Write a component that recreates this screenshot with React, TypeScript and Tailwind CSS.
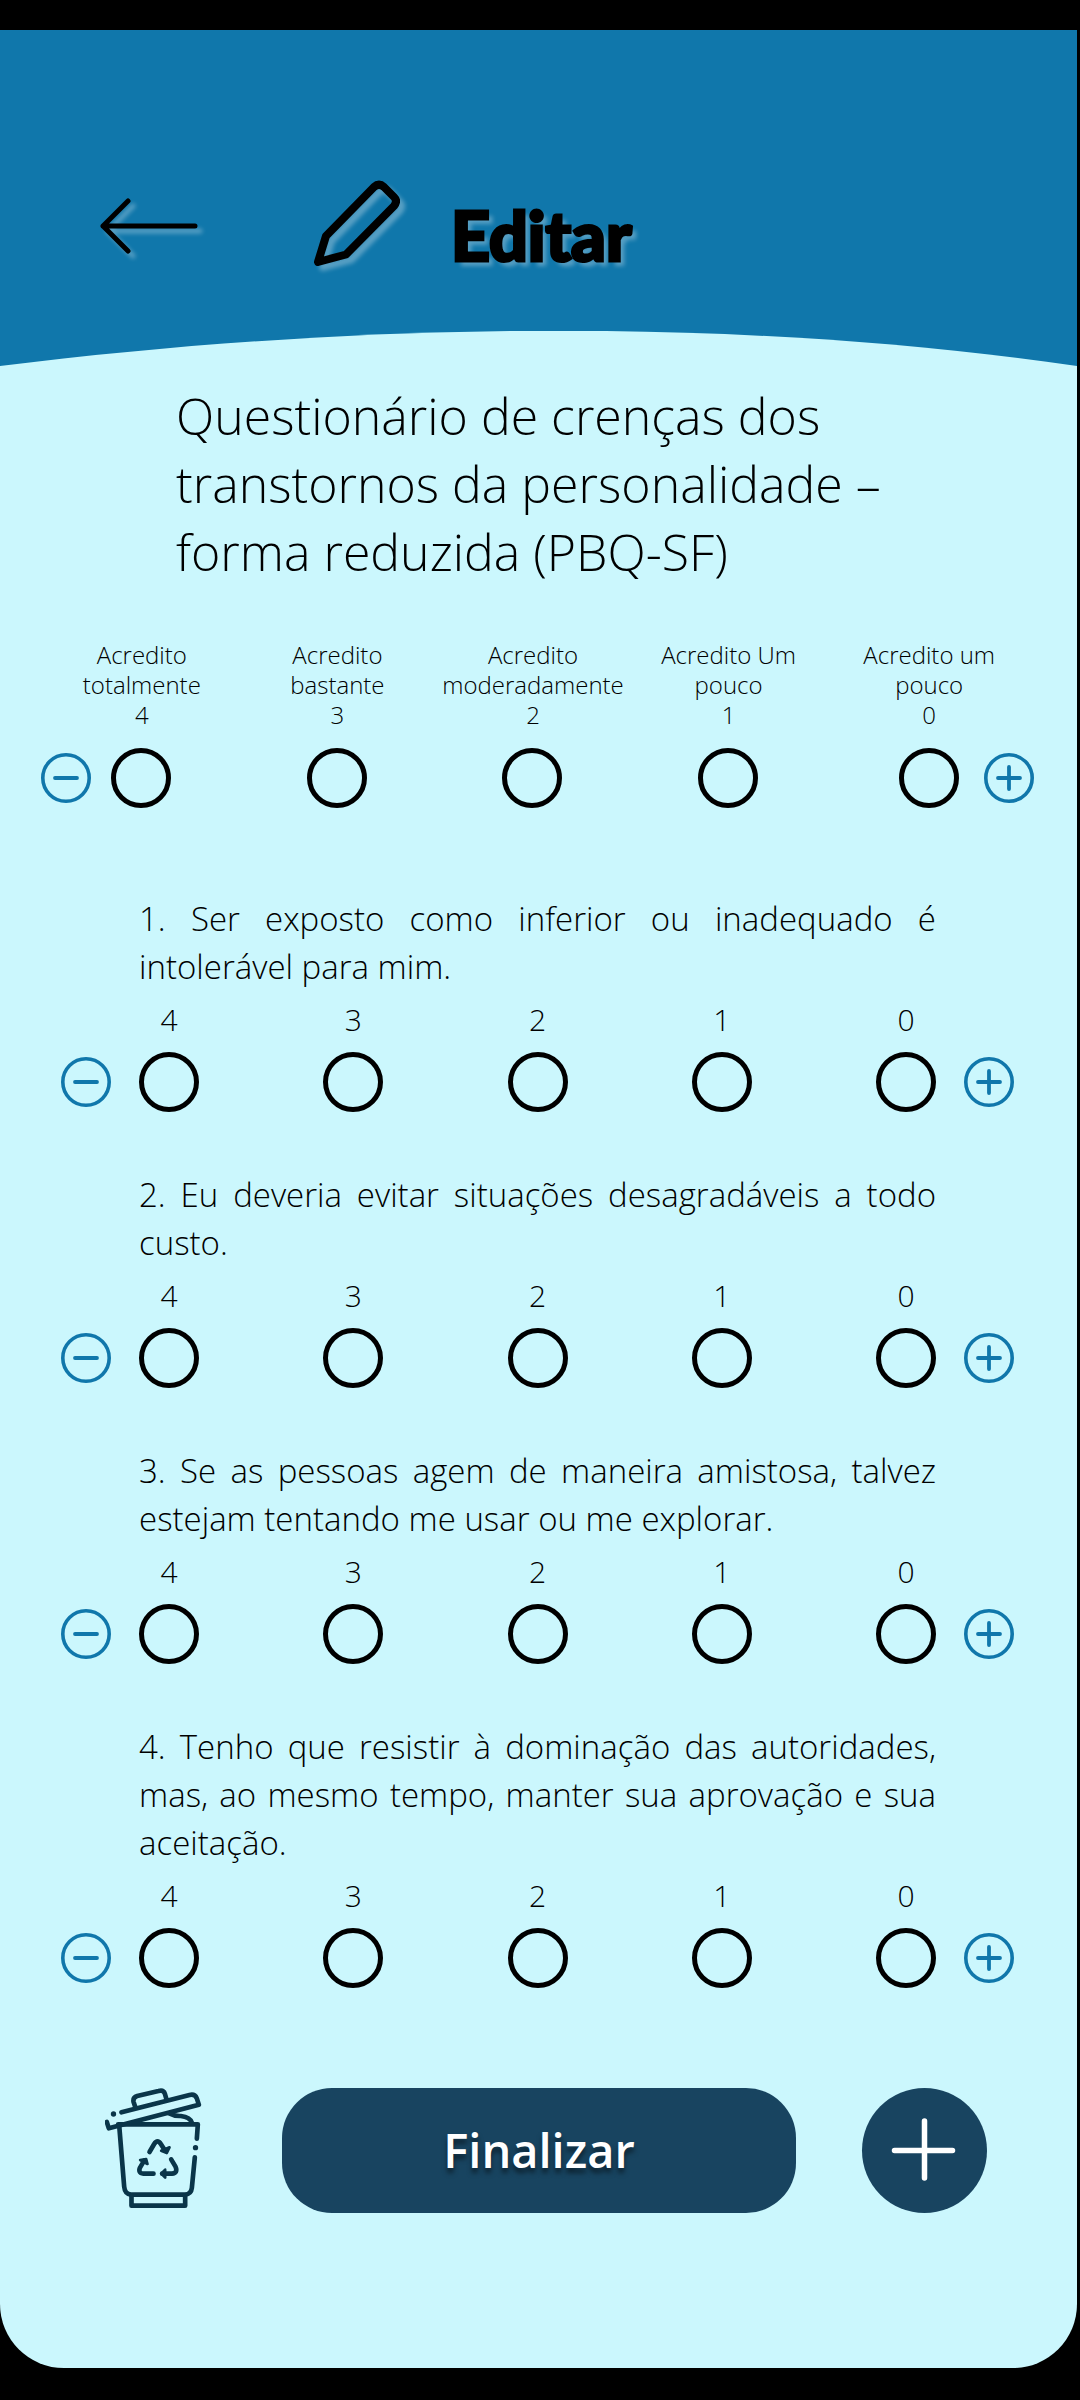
const scale = [
  { value: 4, label: 'Acredito totalmente' },
  { value: 3, label: 'Acredito bastante' },
  { value: 2, label: 'Acredito moderadamente' },
  { value: 1, label: 'Acredito Um pouco' },
  { value: 0, label: 'Acredito um pouco' },
];

const questions = [
  '1. Ser exposto como inferior ou inadequado é intolerável para mim.',
  '2. Eu deveria evitar situações desagradáveis a todo custo.',
  '3. Se as pessoas agem de maneira amistosa, talvez estejam tentando me usar ou me explorar.',
  '4. Tenho que resistir à dominação das autoridades, mas, ao mesmo tempo, manter sua aprovação e sua aceitação.',
];

const radioClass =
  'block size-[60px] shrink-0 cursor-pointer appearance-none rounded-full border-[5px] border-black checked:bg-[#1077ab]';

function RoundButton({ kind, label }: { kind: 'minus' | 'plus'; label: string }) {
  return (
    <button type="button" aria-label={label} className="block size-[50px] shrink-0 cursor-pointer text-[#1077ab]">
      <svg viewBox="0 0 50 50" className="size-full" fill="none" stroke="currentColor" strokeLinecap="round">
        <circle cx="25" cy="25" r="23.2" strokeWidth="3.6" />
        <path d={kind === 'plus' ? 'M14 25H36M25 14V36' : 'M14 25H36'} strokeWidth="3.8" />
      </svg>
    </button>
  );
}

function ArrowIcon() {
  return (
    <svg viewBox="0 0 98 90" className="h-[90px] w-[98px] overflow-visible drop-shadow-[5px_5px_2px_rgba(255,255,255,0.3)]" fill="none" stroke="#000" strokeWidth="5" strokeLinecap="round" strokeLinejoin="round">
      <path d="M95 45H3M28 20L3 45L28 70" />
    </svg>
  );
}

function PencilIcon() {
  return (
    <svg viewBox="0 0 88 90" className="h-[90px] w-[88px] overflow-visible drop-shadow-[5px_5px_2px_rgba(255,255,255,0.3)]" fill="none" stroke="#000" strokeWidth="8" strokeLinejoin="round">
      <path d="M12 55L60 6Q65 1.500 70 6L80 16Q84 20 80 25L32 73.500L4 81Z" />
    </svg>
  );
}

function TrashIcon() {
  return (
    <svg viewBox="45 54 290 366" className="h-[122px] w-[97px]" fill="none" stroke="#0a3549" strokeWidth="14" strokeLinecap="round" strokeLinejoin="round">
      <path d="M94 127L298 75Q314 71 320 85L326 104L56 175L50 156" />
      <path d="M135 110L130 95Q128 82 141 78L205 63Q220 59 224 71L229 88" />
      <path d="M236 130Q252 139 272 138Q300 141 305 158" />
      <path d="M84 163H323L320 206" />
      <path d="M87 165L102 350Q104 372 122 374H285Q303 372 305 354L314 262" />
      <path d="M124 376V407H285V376" />
      <g fill="#0a3549" stroke="none">
        <circle cx="70" cy="132" r="8" />
        <circle cx="316" cy="233" r="8" />
      </g>
      <path d="M178 246L192 222Q202 206 212 222L225 242M243 268L256 290Q264 309 245 311H216M190 311H160Q142 309 150 292L162 272" />
      <path d="M238 232L230 249L213 242ZM225 299L213 311L225 323ZM150 270L168 267L172 282Z" fill="#0a3549" strokeWidth="8" />
    </svg>
  );
}

export default function App() {
  return (
    <div className="min-h-screen bg-black pt-[30px] pr-[3px] pb-8 font-['Open_Sans',sans-serif] text-black">
      <main className="overflow-hidden rounded-b-[64px] bg-[#cbf7fd] pb-[155px]">
        <header className="bg-[#1077ab] pt-[151px]">
          <div className="flex items-end pl-[100px]">
            <button type="button" aria-label="Voltar" className="cursor-pointer self-start">
              <ArrowIcon />
            </button>
            <span className="mr-[49px] ml-[116px] self-start">
              <PencilIcon />
            </span>
            <h1 className="pt-[14px] font-['Lato',sans-serif] text-[68px] leading-[80px] font-black [-webkit-text-stroke:3px_black] [text-shadow:5px_5px_4px_rgba(255,255,255,0.3)]">
              Editar
            </h1>
          </div>
          <svg viewBox="0 0 1077 35" preserveAspectRatio="none" className="mt-14 block h-[35px] w-full" aria-hidden="true">
            <path d="M0 35C360 -10 740 -14 1077 35Z" fill="#cbf7fd" />
          </svg>
        </header>

        <h2 className="mt-4 ml-44 max-w-[730px] text-[50px] leading-[68px] font-light">
          Questionário de crenças dos transtornos da personalidade – forma reduzida (PBQ-SF)
        </h2>

        <section aria-label="Escala" className="mt-[54px]">
          <div className="grid grid-cols-[98fr_98fr_98fr_98fr_103fr] pr-[45px] pl-[44px] text-center text-2xl leading-[30px] font-light">
            {scale.map(({ value, label }) => (
              <label key={value} htmlFor={`escala-${value}`} className="flex flex-col items-center">
                <span className="w-min min-w-[150px]">{label}</span>
                <span>{value}</span>
              </label>
            ))}
          </div>
          <div className="mt-[18px] flex items-center pr-[43px] pl-[41px]">
            <RoundButton kind="minus" label="Diminuir escala" />
            <div className="mr-[25px] ml-5 grid flex-1 grid-cols-[39fr_39fr_39fr_40fr_60px]">
              {scale.map(({ value }) => (
                <input key={value} id={`escala-${value}`} type="radio" name="escala" value={value} className={radioClass} />
              ))}
            </div>
            <RoundButton kind="plus" label="Aumentar escala" />
          </div>
        </section>

        <div className="mt-[87px] flex flex-col gap-[59px]">
          {questions.map((question, i) => (
            <fieldset key={question} aria-label={`Pergunta ${i + 1}`} className="pr-[63px] pl-[61px] font-light">
              <p className="mx-[78px] text-justify text-[33px] leading-[48px]">{question}</p>
              <div className="mt-[11px] flex items-end gap-7">
                <div className="pb-[5px]">
                  <RoundButton kind="minus" label={`Diminuir pergunta ${i + 1}`} />
                </div>
                <div className="flex flex-1 justify-between">
                  {scale.map(({ value }) => (
                    <label key={value} className="flex w-[60px] flex-col items-center gap-[14px] text-3xl leading-9">
                      {value}
                      <input type="radio" name={`pergunta-${i + 1}`} value={value} className={radioClass} />
                    </label>
                  ))}
                </div>
                <div className="pb-[5px]">
                  <RoundButton kind="plus" label={`Aumentar pergunta ${i + 1}`} />
                </div>
              </div>
            </fieldset>
          ))}
        </div>

        <footer className="mt-[100px] flex pr-[90px] pl-[105px]">
          <button type="button" aria-label="Excluir" className="shrink-0 cursor-pointer self-start">
            <TrashIcon />
          </button>
          <button
            type="button"
            className="mr-[66px] ml-20 h-[125px] flex-1 cursor-pointer rounded-[50px] bg-[#184460] text-[47px] font-semibold text-white [text-shadow:0_5px_5px_rgba(0,0,0,0.5)]"
          >
            Finalizar
          </button>
          <button type="button" aria-label="Adicionar pergunta" className="size-[125px] shrink-0 cursor-pointer rounded-full bg-[#184460]">
            <svg viewBox="0 0 125 125" className="size-full" stroke="#fff" strokeWidth="5.5" strokeLinecap="round">
              <path d="M32.500 62.500H90.500M62.500 33V90" />
            </svg>
          </button>
        </footer>
      </main>
    </div>
  );
}
